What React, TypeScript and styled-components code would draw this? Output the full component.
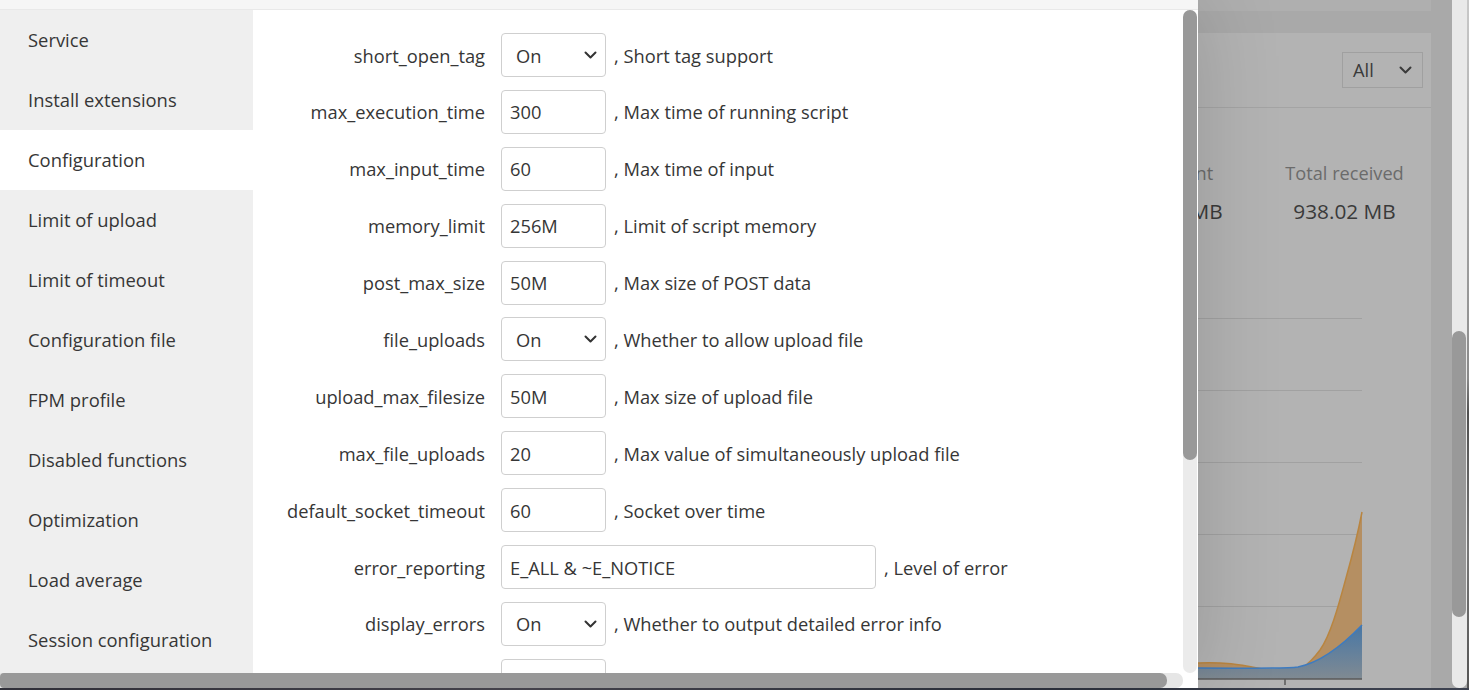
import React from 'react';
import styled, { createGlobalStyle } from 'styled-components';

const Global = createGlobalStyle`
  html, body { margin: 0; padding: 0; overflow: hidden; }
  body { font-family: "Open Sans", "Noto Sans", sans-serif; }
  * { box-sizing: border-box; }
`;

const Screen = styled.div`
  width: 1469px;
  height: 690px;
  display: flex;
  flex-direction: column;
  overflow: hidden;
`;

const Main = styled.div`
  height: 688px;
  display: flex;
`;

const Taskbar = styled.div`
  height: 2px;
  background: linear-gradient(90deg, #34333d, #4b4953 35%, #2f3440 70%, #3d4250);
`;

/* ---------- modal ---------- */
const Modal = styled.div`
  width: 1198px;
  flex: none;
  display: flex;
  flex-direction: column;
  background: #fff;
  position: relative;
  z-index: 1;
  box-shadow: 0 0 80px rgba(0, 0, 0, 0.16);
`;

const ModalTop = styled.div`
  height: 10px;
  background: #f6f6f6;
  border-bottom: 1px solid #e9e9e9;
`;

const Body = styled.div`
  display: grid;
  grid-template-columns: 1183px 15px;
  grid-template-rows: 663px 15px;
`;

const Viewport = styled.div`
  display: flex;
  overflow: hidden;
`;

const Sidebar = styled.nav`
  width: 253px;
  flex: none;
  background: #efefef;
  display: flex;
  flex-direction: column;
`;

const NavItem = styled.div<{ $active?: boolean }>`
  height: 60px;
  flex: none;
  display: flex;
  align-items: center;
  padding-left: 28px;
  padding-bottom: 2px;
  font-size: 18.4px;
  color: #363636;
  background: ${p => (p.$active ? '#fff' : 'transparent')};
`;

const Content = styled.div`
  flex: 1;
  padding-top: 23px;
  display: flex;
  flex-direction: column;
  gap: 12.9px;
`;

const Row = styled.div`
  display: flex;
  align-items: center;
  height: 44px;
  flex: none;
`;

const Label = styled.div`
  width: 232px;
  flex: none;
  text-align: right;
  font-size: 18.3px;
  color: #363636;
  margin-right: 16px;
  white-space: nowrap;
`;

const Field = styled.div<{ $wide?: boolean }>`
  width: ${p => (p.$wide ? '375px' : '105px')};
  height: 44px;
  flex: none;
  border: 1px solid #cfcfcf;
  border-radius: 4px;
  display: flex;
  align-items: center;
  padding-left: 8px;
  font-size: 18.3px;
  color: #363636;
  background: #fff;
`;

const SelectBox = styled(Field)`
  padding-left: 14px;
  padding-right: 8px;
  justify-content: space-between;
`;

const Desc = styled.div`
  margin-left: 8px;
  font-size: 18.3px;
  color: #363636;
  white-space: nowrap;
`;

const VScroll = styled.div`
  padding-right: 1px;
  display: flex;
  background: #fff;
`;

const VTrack = styled.div`
  flex: 1;
  background: #ebebeb;
  border-radius: 7px;
  display: flex;
  flex-direction: column;
`;

const VThumb = styled.div<{ $h: number }>`
  height: ${p => p.$h}px;
  background: #999;
  border-radius: 7px;
`;

const HScroll = styled.div`
  display: flex;
  background: #e6e6e6;
  border-radius: 0 7px 7px 0;
`;

const HThumb = styled.div`
  width: 1167px;
  background: #999;
  border-radius: 4px 7px 7px 4px;
`;

const Corner = styled.div`
  background: #fff;
`;

/* ---------- dimmed page behind ---------- */
const Backdrop = styled.div`
  flex: 1;
  display: flex;
  background: #a9a9a9;
`;

const BackColumn = styled.div`
  width: 233px;
  flex: none;
  display: flex;
  flex-direction: column;
  gap: 22px;
`;

const TopCard = styled.div`
  height: 11px;
  background: #afafaf;
`;

const Card = styled.div`
  flex: 1;
  background: #b3b3b3;
  display: flex;
  flex-direction: column;
  overflow: hidden;
`;

const CardHead = styled.div`
  height: 75px;
  flex: none;
  border-bottom: 1px solid #a4a4a4;
  display: flex;
  justify-content: flex-end;
  align-items: flex-start;
  padding: 19px 8px 0 0;
`;

const DimSelect = styled.div`
  width: 81px;
  height: 36px;
  border: 1px solid #a0a0a0;
  display: flex;
  align-items: center;
  justify-content: space-between;
  padding: 0 10px 1px 10px;
  font-size: 18.3px;
  color: #3a3a3a;
`;

const Stats = styled.div`
  height: 150px;
  flex: none;
  display: flex;
  justify-content: flex-end;
  padding-top: 52px;
`;

const Stat = styled.div`
  width: 173px;
  flex: none;
  display: flex;
  flex-direction: column;
  align-items: center;
  gap: 12px;
  white-space: nowrap;
`;

const StatLabel = styled.div`
  font-size: 18.2px;
  line-height: 26px;
  color: #6b6b6b;
`;

const StatValue = styled.div`
  font-size: 20.8px;
  line-height: 26px;
  color: #3a3a3a;
`;

const PageGap = styled.div`
  width: 21px;
  flex: none;
`;

const OuterScroll = styled.div`
  width: 15px;
  flex: none;
  background: #e9e9e9;
  border-radius: 0 0 7px 7px;
  display: flex;
  flex-direction: column;
  padding-top: 331px;
`;

const OuterThumb = styled.div`
  height: 286px;
  width: 14px;
  background: #999;
  border-radius: 7px;
`;

const Edge = styled.div`
  width: 2px;
  flex: none;
  background: linear-gradient(180deg, #c8c8c8 0%, #8a8a8a 55%, #505050 60%, #777 80%, #555 100%);
`;

const Chevron = ({ color = '#333' }: { color?: string }) => (
  <svg width="13" height="8" viewBox="0 0 13 8">
    <path d="M1.5 1.5 L6.5 6.5 L11.5 1.5" fill="none" stroke={color} strokeWidth="2" strokeLinecap="round" strokeLinejoin="round" />
  </svg>
);

type RowDef = { label: string; value: string; kind: 'select' | 'input' | 'wide'; desc: string };

const rows: RowDef[] = [
  { label: 'short_open_tag', value: 'On', kind: 'select', desc: ', Short tag support' },
  { label: 'max_execution_time', value: '300', kind: 'input', desc: ', Max time of running script' },
  { label: 'max_input_time', value: '60', kind: 'input', desc: ', Max time of input' },
  { label: 'memory_limit', value: '256M', kind: 'input', desc: ', Limit of script memory' },
  { label: 'post_max_size', value: '50M', kind: 'input', desc: ', Max size of POST data' },
  { label: 'file_uploads', value: 'On', kind: 'select', desc: ', Whether to allow upload file' },
  { label: 'upload_max_filesize', value: '50M', kind: 'input', desc: ', Max size of upload file' },
  { label: 'max_file_uploads', value: '20', kind: 'input', desc: ', Max value of simultaneously upload file' },
  { label: 'default_socket_timeout', value: '60', kind: 'input', desc: ', Socket over time' },
  { label: 'error_reporting', value: 'E_ALL & ~E_NOTICE', kind: 'wide', desc: ', Level of error' },
  { label: 'display_errors', value: 'On', kind: 'select', desc: ', Whether to output detailed error info' },
  /* next row is scrolled below the fold: only the top of its box shows */
  { label: '', value: '', kind: 'input', desc: '' },
];

const nav = [
  'Service',
  'Install extensions',
  'Configuration',
  'Limit of upload',
  'Limit of timeout',
  'Configuration file',
  'FPM profile',
  'Disabled functions',
  'Optimization',
  'Load average',
  'Session configuration',
];

const Chart = () => (
  <svg width="233" height="430" viewBox="0 0 233 430" style={{ flex: 'none', display: 'block' }}>
    <defs>
      <linearGradient id="blueFill" x1="0" y1="0" x2="0" y2="1">
        <stop offset="0" stopColor="#4777a6" />
        <stop offset="1" stopColor="#808a92" />
      </linearGradient>
    </defs>
    {[60, 132, 204, 276, 348].map(y => (
      <line key={y} x1="0" x2="164" y1={y + 0.5} y2={y + 0.5} stroke="#a1a1a1" strokeWidth="1.2" />
    ))}
    <path
      d="M0,405 C40,403 60,412 87,414 C100,415 110,408 122,392 C132,378 140,350 148,320 C155,295 160,275 164,254 L164,421 L0,421 Z"
      fill="#b58f62"
    />
    <path
      d="M0,405 C40,403 60,412 87,414 C100,415 110,408 122,392 C132,378 140,350 148,320 C155,295 160,275 164,254"
      fill="none"
      stroke="#b98540"
      strokeWidth="1.5"
    />
    <path
      d="M0,410 C50,410 85,411 100,409 C120,405 140,392 164,367 L164,421 L0,421 Z"
      fill="url(#blueFill)"
    />
    <path d="M0,410 C50,410 85,411 100,409 C120,405 140,392 164,367" fill="none" stroke="#3d7bc0" strokeWidth="1.5" />
    <line x1="0" x2="164" y1="421" y2="421" stroke="#5a5a5a" strokeWidth="1.5" />
    <line x1="87" x2="87" y1="421" y2="427" stroke="#5a5a5a" strokeWidth="1.5" />
  </svg>
);

export default function App() {
  return (
    <>
      <Global />
      <Screen>
        <Main>
          <Modal>
            <ModalTop />
            <Body>
              <Viewport>
                <Sidebar>
                  {nav.map(n => (
                    <NavItem key={n} $active={n === 'Configuration'}>
                      {n}
                    </NavItem>
                  ))}
                </Sidebar>
                <Content>
                  {rows.map((r, i) => (
                    <Row key={i}>
                      <Label>{r.label}</Label>
                      {r.kind === 'select' ? (
                        <SelectBox>
                          <span>{r.value}</span>
                          <Chevron />
                        </SelectBox>
                      ) : (
                        <Field $wide={r.kind === 'wide'}>{r.value}</Field>
                      )}
                      {r.desc && <Desc>{r.desc}</Desc>}
                    </Row>
                  ))}
                </Content>
              </Viewport>
              <VScroll>
                <VTrack>
                  <VThumb $h={450} />
                </VTrack>
              </VScroll>
              <HScroll>
                <HThumb />
              </HScroll>
              <Corner />
            </Body>
          </Modal>
          <Backdrop>
            <BackColumn>
              <TopCard />
              <Card>
                <CardHead>
                  <DimSelect>
                    <span>All</span>
                    <Chevron color="#3a3a3a" />
                  </DimSelect>
                </CardHead>
                <Stats>
                  <Stat>
                    <StatLabel>Total sent</StatLabel>
                    <StatValue>412.37 MB</StatValue>
                  </Stat>
                  <Stat>
                    <StatLabel>Total received</StatLabel>
                    <StatValue>938.02 MB</StatValue>
                  </Stat>
                </Stats>
                <Chart />
              </Card>
            </BackColumn>
            <PageGap />
            <OuterScroll>
              <OuterThumb />
            </OuterScroll>
            <Edge />
          </Backdrop>
        </Main>
        <Taskbar />
      </Screen>
    </>
  );
}
